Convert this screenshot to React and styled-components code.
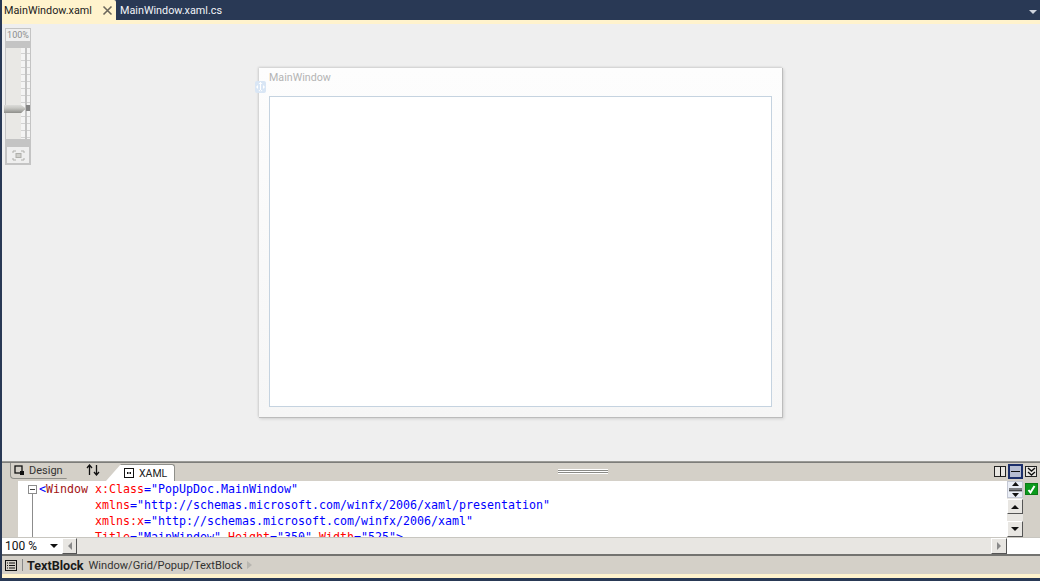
import React from 'react'
import styled, { createGlobalStyle } from 'styled-components'

const Global = createGlobalStyle`
  html, body { margin: 0; padding: 0; background: #293955; overflow: hidden; }
  * { box-sizing: border-box; }
`

const Shell = styled.div`
  width: 1040px;
  height: 581px;
  display: flex;
  flex-direction: column;
  padding-left: 2px;
  background: #293955;
  font-family: Roboto, "Open Sans", sans-serif;
`

const TabBar = styled.div`
  height: 20px;
  display: flex;
  align-items: stretch;
  position: relative;
  flex: none;
`

const DocTab = styled.div`
  display: flex;
  align-items: center;
  height: 20px;
  width: ${p => p.$width}px;
  padding-left: ${p => (p.$active ? 2 : 4)}px;
  font-size: 10.8px;
  color: ${p => (p.$active ? '#1c1c1c' : '#f2f4f8')};
  background: ${p => (p.$active ? '#fff3cd' : 'transparent')};
  border-top-right-radius: ${p => (p.$active ? 2 : 0)}px;
  justify-content: space-between;
  padding-right: ${p => (p.$active ? 3 : 0)}px;
`

const MenuArrow = styled.div`
  position: absolute;
  right: 3px;
  top: 10px;
  width: 0;
  height: 0;
  border-left: 4px solid transparent;
  border-right: 4px solid transparent;
  border-top: 4px solid #ced4dd;
`

const Accent = styled.div`
  height: 4px;
  flex: none;
  background: #fff3cd;
`

const Canvas = styled.div`
  position: relative;
  height: 437px;
  flex: none;
  padding: 44px 0 0 257px;
  background: #efefef;
`

const ZoomRail = styled.div`
  position: absolute;
  left: 3px;
  top: 4px;
  width: 26px;
  height: 137px;
  display: flex;
  flex-direction: column;
  background: #e9e8e5;
  border: 1px solid #c4c4c4;
`

const ZoomLabel = styled.div`
  height: 12px;
  font-size: 9px;
  line-height: 12px;
  text-align: center;
  color: #8c8c8c;
  background: #efefef;
  flex: none;
`

const ZoomCap = styled.div`
  height: 7px;
  background: #c4c4c4;
  flex: none;
`

const ZoomTrack = styled.div`
  position: relative;
  flex: 1;
  background: #e9e8e5;
`

const Ticks = styled.div`
  position: absolute;
  right: 0;
  top: 0;
  bottom: 0;
  width: 9px;
  background: repeating-linear-gradient(180deg, #f4f4f4 0 5px, #d2d2d2 5px 6px, #f4f4f4 6px 7px);
  &::after {
    content: '';
    position: absolute;
    left: 4px;
    top: 0;
    bottom: 0;
    width: 2px;
    background: #c2c2c2;
  }
`

const Thumb = styled.div`
  position: absolute;
  left: -2px;
  top: 56px;
  width: 22px;
  height: 9px;
  background: linear-gradient(180deg, #e2e2e0 0%, #c8c8c4 45%, #8e8e8a 100%);
  clip-path: polygon(0 10%, 78% 10%, 100% 50%, 78% 100%, 0 100%);
`

const ThumbMark = styled.div`
  position: absolute;
  right: 0;
  top: 57px;
  width: 4px;
  height: 6px;
  background: #858585;
`

const FitButton = styled.div`
  height: 18px;
  flex: none;
  padding: 1px;
  display: flex;
  align-items: center;
  justify-content: center;
  background: #c4c4c4;
`

const FitFace = styled.div`
  width: 100%;
  height: 100%;
  display: flex;
  align-items: center;
  justify-content: center;
  background: #efefef;
`

const DesignWindow = styled.div`
  position: relative;
  width: 524px;
  height: 350px;
  padding: 28px 10px 10px;
  background: linear-gradient(180deg, #fdfdfd, #f6f6f6);
  border-right: 1px solid #bcbcbc;
  border-bottom: 1px solid #bcbcbc;
  box-shadow: 1px 1px 3px rgba(0, 0, 0, 0.12), -1px -1px 2px rgba(0, 0, 0, 0.12);
`

const WindowTitle = styled.div`
  position: absolute;
  left: 10px;
  top: 2px;
  font-size: 10.7px;
  line-height: 15px;
  color: #b4b4b4;
`

const MoveHandle = styled.div`
  position: absolute;
  left: -4px;
  top: 13px;
  width: 11px;
  height: 12px;
  border-radius: 2px;
  background: #d9e6f5;
  display: flex;
  align-items: center;
  justify-content: center;
`

const WindowBody = styled.div`
  height: 311px;
  background: #fff;
  border: 1px solid #c5d3e0;
`

const SplitLine = styled.div`
  height: 2px;
  flex: none;
  background: linear-gradient(180deg, #a8a8a4, #6e6e6c);
`

const ViewBar = styled.div`
  position: relative;
  height: 18px;
  flex: none;
  display: flex;
  align-items: flex-end;
  padding-left: 8px;
  background: #d4d0c8;
`

const DesignTab = styled.div`
  width: 72px;
  height: 16px;
  margin-bottom: 2px;
  display: flex;
  align-items: center;
  gap: 4px;
  padding-left: 3px;
  font-size: 11px;
  color: #333;
  background: #d4d0c8;
  border: 1px solid #8f8f8a;
  border-top: none;
  border-right: none;
  border-bottom-left-radius: 4px;
  clip-path: polygon(0 0, 100% 0, 78% 100%, 0 100%);
`

const SwapIcon = styled.div`
  width: 24px;
  height: 14px;
  margin: 0 0 3px -1px;
  display: flex;
  justify-content: center;
`

const XamlTab = styled.div`
  height: 17px;
  width: 69px;
  margin-left: 1px;
  padding-left: 18px;
  display: flex;
  align-items: center;
  gap: 5px;
  font-size: 10.5px;
  color: #222;
  background: #fff;
  border-top: 1px solid #8f8f8a;
  border-right: 1px solid #8f8f8a;
  border-top-right-radius: 3px;
  clip-path: polygon(0 100%, 15px 0, 100% 0, 100% 100%);
`

const Grip = styled.div`
  position: absolute;
  left: 556px;
  top: 6px;
  width: 50px;
  height: 5px;
  background: linear-gradient(180deg, #fff 0 1px, #8a8a86 1px 2px, #fff 2px 3px, #8a8a86 3px 4px, #fff 4px 5px);
`

const PaneButtons = styled.div`
  position: absolute;
  right: 2px;
  top: 1px;
  display: flex;
  gap: 0;
`

const PaneButton = styled.div`
  width: ${p => (p.$selected ? 15 : 12)}px;
  height: ${p => (p.$selected ? 15 : 11)}px;
  margin: ${p => (p.$selected ? '0 1px' : '2px 1px')};
  display: flex;
  align-items: center;
  justify-content: center;
  border: ${p => (p.$selected ? '2px solid #1c2f6b' : '1px solid #222')};
  background: ${p => (p.$selected ? '#b6bdd2' : '#e8e6e2')};
`

const EditorRow = styled.div`
  height: 56px;
  flex: none;
  display: flex;
`

const Gutter = styled.div`
  width: 16px;
  flex: none;
  background: #d4d0c8;
`

const CodePane = styled.div`
  position: relative;
  flex: 1;
  overflow: hidden;
  background: #fff;
  padding-left: 21px;
  font-family: "DejaVu Sans Mono", "Liberation Mono", monospace;
  font-size: 11.63px;
  line-height: 16px;
  white-space: pre;
`

const CodeLine = styled.div`
  height: 16px;
`

const Fold = styled.div`
  position: absolute;
  left: 10px;
  top: 4px;
  width: 9px;
  height: 9px;
  border: 1px solid #8c8c8c;
  background: #fff;
  &::before {
    content: '';
    position: absolute;
    left: 1px;
    top: 3px;
    width: 5px;
    height: 1px;
    background: #444;
  }
  &::after {
    content: '';
    position: absolute;
    left: 3px;
    top: 8px;
    width: 1px;
    height: 50px;
    background: #8c8c8c;
  }
`

const Blue = styled.span`color: #0000ff;`
const Red = styled.span`color: #ff0000;`
const Maroon = styled.span`color: #a31515;`

const VScroll = styled.div`
  width: 16px;
  flex: none;
  display: flex;
  flex-direction: column;
  background: #e8e6e2;
`

const SplitButton = styled.div`
  height: 17px;
  flex: none;
  margin-bottom: 1px;
  display: flex;
  align-items: center;
  justify-content: center;
  background: #eaeef6;
  border: 1px solid #c4c8d4;
`

const ScrollButton = styled.div`
  width: ${p => p.$w || 16}px;
  height: ${p => p.$h || 16}px;
  flex: none;
  display: flex;
  align-items: center;
  justify-content: center;
  background: #e8e6e2;
  border-top: 1px solid #fff;
  border-left: 1px solid #fff;
  border-right: 1px solid #555;
  border-bottom: 1px solid #555;
`

const ScrollGap = styled.div`
  flex: 1;
`

const Arrow = styled.div`
  width: 0;
  height: 0;
  border-style: solid;
  border-color: transparent;
  ${p => p.$dir === 'up' && 'border-width: 0 4px 4px; border-bottom-color: #111;'}
  ${p => p.$dir === 'down' && 'border-width: 4px 4px 0; border-top-color: #111;'}
  ${p => p.$dir === 'left' && 'border-width: 4px 4px 4px 0; border-right-color: #8a8a8a;'}
  ${p => p.$dir === 'right' && 'border-width: 4px 0 4px 4px; border-left-color: #8a8a8a;'}
`

const CheckMargin = styled.div`
  width: 17px;
  flex: none;
  padding: 2px 0 0 2px;
  background: #d4d0c8;
`

const CheckBadge = styled.div`
  width: 13px;
  height: 12px;
  display: flex;
  align-items: center;
  justify-content: center;
  background: #0a9a1c;
  border: 1px solid #0b7a15;
`

const HScrollRow = styled.div`
  height: 17px;
  flex: none;
  display: flex;
  background: #e8e6e2;
  border-top: 1px solid #c8c6c0;
`

const ZoomCombo = styled.div`
  width: 60px;
  flex: none;
  display: flex;
  align-items: center;
  justify-content: space-between;
  padding: 0 4px 0 3px;
  font-size: 12px;
  color: #111;
  background: #fff;
`

const HTrack = styled.div`
  flex: 1;
`

const WhiteCorner = styled.div`
  width: 33px;
  flex: none;
  background: #fff;
`

const StatusBar = styled.div`
  height: 20px;
  flex: none;
  display: flex;
  align-items: center;
  padding-left: 3px;
  background: #d4d0c8;
  border-top: 2px solid #737370;
`

const StatusDivider = styled.div`
  width: 1px;
  height: 12px;
  margin: 0 4px 0 5px;
  background: #888;
`

const StatusName = styled.b`
  font-size: 12.6px;
  color: #1a1a1a;
  margin-right: 5px;
`

const StatusPath = styled.span`
  font-size: 11.1px;
  color: #333;
`

const PathArrow = styled.div`
  width: 0;
  height: 0;
  margin-left: 5px;
  border-style: solid;
  border-width: 4px 0 4px 5px;
  border-color: transparent transparent transparent #b8b6b0;
`

const BottomAccent = styled.div`
  height: 4px;
  flex: none;
  background: #fff3cd;
`

function App() {
  return (
    <Shell>
      <Global />
      <TabBar>
        <DocTab $active $width={114}>
          MainWindow.xaml
          <svg width="11" height="11" viewBox="0 0 11 11">
            <path d="M1.5 1.5l8 8M9.5 1.5l-8 8" stroke="#6b675c" strokeWidth="1.6" />
          </svg>
        </DocTab>
        <DocTab $width={110}>MainWindow.xaml.cs</DocTab>
        <MenuArrow />
      </TabBar>
      <Accent />
      <Canvas>
        <ZoomRail>
          <ZoomLabel>100%</ZoomLabel>
          <ZoomCap />
          <ZoomTrack>
            <Ticks />
            <Thumb />
            <ThumbMark />
          </ZoomTrack>
          <ZoomCap />
          <FitButton>
            <FitFace>
              <svg width="13" height="11" viewBox="0 0 13 11" fill="none" stroke="#b0b0ac">
                <path d="M1 3V1h3M9 1h3v2M1 8v2h3M9 10h3V8" />
                <rect x="4" y="3.5" width="5" height="4" fill="#cfcfcb" />
              </svg>
            </FitFace>
          </FitButton>
        </ZoomRail>
        <DesignWindow>
          <WindowTitle>MainWindow</WindowTitle>
          <MoveHandle>
            <svg width="9" height="10" viewBox="0 0 9 10" fill="#fff">
              <path d="M4 0h1v10H4zM4.500 0l2 2h-4zM4.500 10l2-2h-4zM0 5l2-2v4zM9 5L7 3v4z" />
            </svg>
          </MoveHandle>
          <WindowBody />
        </DesignWindow>
      </Canvas>
      <SplitLine />
      <ViewBar>
        <DesignTab>
          <svg width="11" height="11" viewBox="0 0 11 11" fill="none" stroke="#111">
            <rect x="1" y="1" width="7" height="7" strokeWidth="1.3" />
            <rect x="6" y="6" width="4" height="4" fill="#111" stroke="none" />
          </svg>
          Design
        </DesignTab>
        <SwapIcon>
          <svg width="14" height="12" viewBox="0 0 14 12" fill="none" stroke="#111" strokeWidth="1.3">
            <path d="M3.500 11V2M1 4l2.500-3L6 4M10.500 1v9M8 8l2.500 3L13 8" />
          </svg>
        </SwapIcon>
        <XamlTab>
          <svg width="10" height="10" viewBox="0 0 10 10" fill="none" stroke="#111">
            <rect x="0.5" y="0.5" width="9" height="9" />
            <path d="M3 5l1-1v2zM7 5L6 4v2z" />
          </svg>
          XAML
        </XamlTab>
        <Grip />
        <PaneButtons>
          <PaneButton>
            <svg width="3" height="9"><path d="M1.5 0v9" stroke="#111" /></svg>
          </PaneButton>
          <PaneButton $selected>
            <svg width="9" height="3"><path d="M0 1.5h9" stroke="#111" /></svg>
          </PaneButton>
          <PaneButton>
            <svg width="9" height="9" viewBox="0 0 9 9" fill="none" stroke="#111" strokeWidth="1.4">
              <path d="M1 1l3.500 3L8 1M1 5l3.500 3L8 5" />
            </svg>
          </PaneButton>
        </PaneButtons>
      </ViewBar>
      <EditorRow>
        <Gutter />
        <CodePane>
          <Fold />
          <CodeLine><Blue>{'<'}</Blue><Maroon>Window</Maroon> <Red>x:Class</Red><Blue>="PopUpDoc.MainWindow"</Blue></CodeLine>
          <CodeLine>{'        '}<Red>xmlns</Red><Blue>="http://schemas.microsoft.com/winfx/2006/xaml/presentation"</Blue></CodeLine>
          <CodeLine>{'        '}<Red>xmlns:x</Red><Blue>="http://schemas.microsoft.com/winfx/2006/xaml"</Blue></CodeLine>
          <CodeLine>{'        '}<Red>Title</Red><Blue>="MainWindow"</Blue> <Red>Height</Red><Blue>="350"</Blue> <Red>Width</Red><Blue>="525"&gt;</Blue></CodeLine>
        </CodePane>
        <VScroll>
          <SplitButton>
            <svg width="13" height="15" viewBox="0 0 13 15" fill="#111">
              <path d="M6.500 0l3.500 4H3zM6.500 15L10 11H3zM0 6.500h13v.9H0zM0 8.300h13v.9H0z" />
            </svg>
          </SplitButton>
          <ScrollButton $h={15}><Arrow $dir="up" /></ScrollButton>
          <ScrollGap />
          <ScrollButton $h={16}><Arrow $dir="down" /></ScrollButton>
        </VScroll>
        <CheckMargin>
          <CheckBadge>
            <svg width="9" height="9" viewBox="0 0 9 9" fill="none" stroke="#fff" strokeWidth="2">
              <path d="M1.500 5l2 2.500L7.500 1" />
            </svg>
          </CheckBadge>
        </CheckMargin>
      </EditorRow>
      <HScrollRow>
        <ZoomCombo>
          100 %
          <Arrow $dir="down" />
        </ZoomCombo>
        <ScrollButton $w={15} $h={16}><Arrow $dir="left" /></ScrollButton>
        <HTrack />
        <ScrollButton $w={16} $h={16}><Arrow $dir="right" /></ScrollButton>
        <WhiteCorner />
      </HScrollRow>
      <StatusBar>
        <svg width="12" height="11" viewBox="0 0 12 11" fill="none" stroke="#111">
          <rect x="0.500" y="0.500" width="11" height="10" />
          <path d="M2 3h1M4 3h6M2 5.500h1M4 5.500h6M2 8h1M4 8h6" />
        </svg>
        <StatusDivider />
        <StatusName>TextBlock</StatusName>
        <StatusPath>Window/Grid/Popup/TextBlock</StatusPath>
        <PathArrow />
      </StatusBar>
      <BottomAccent />
    </Shell>
  )
}

export default App
